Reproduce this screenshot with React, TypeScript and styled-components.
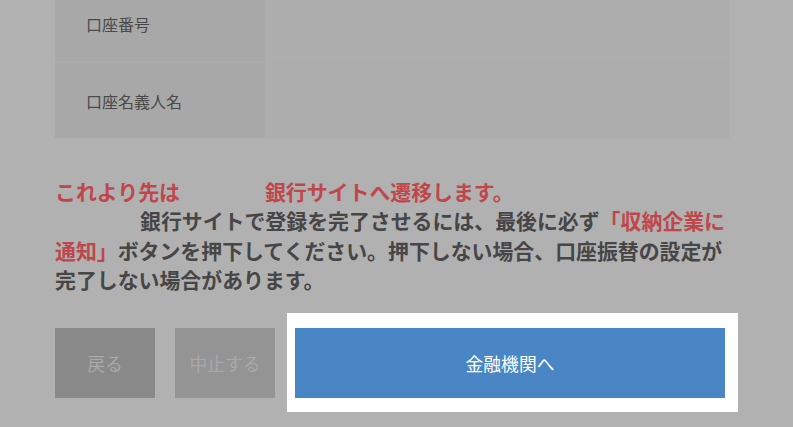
import styled, { createGlobalStyle } from "styled-components";

const GlobalStyle = createGlobalStyle`
  html {
    overflow: hidden;
    background: #b1b1b1;
  }
  body {
    margin: 0;
    padding: 0;
    font-family: "Noto Sans CJK JP", "Noto Sans", sans-serif;
  }
`;

const Page = styled.div`
  width: 675px;
  padding-left: 55px;
  padding-bottom: 30px;
`;

const Table = styled.div`
  margin-top: -13px;
  display: flex;
  flex-direction: column;
  gap: 3px;
  background: #acacac;
`;

const Row = styled.div`
  display: flex;
  height: 74px;
`;

const Label = styled.div`
  width: 179px;
  padding-left: 31px;
  background: #a8a8a8;
  color: #4a4a4a;
  font-size: 16px;
  display: flex;
  align-items: center;
`;

const Value = styled.div`
  flex: 1;
  background: #adadad;
`;

const Notice = styled.p`
  margin: 39px 0 0;
  font-size: 20.9px;
  line-height: 29.3px;
  font-weight: bold;
  color: #464646;
`;

const Red = styled.span`
  color: #bf474b;
`;

const Blank = styled.span`
  display: inline-block;
  width: 85px;
`;

const Actions = styled.div`
  margin-top: 34px;
  display: flex;
  gap: 20px;
`;

const Button = styled.button<{ $tone: string; $width: number }>`
  width: ${(p) => p.$width}px;
  height: 70px;
  border: none;
  padding: 0;
  background: ${(p) => p.$tone};
  color: #aaaaaa;
  font-family: inherit;
  font-size: 17.8px;
`;

const Highlight = styled.div`
  position: relative;
  &::before {
    content: "";
    position: absolute;
    top: -15px;
    right: -13px;
    bottom: -14px;
    left: -8px;
    background: #ffffff;
  }
`;

const PrimaryButton = styled(Button)`
  position: relative;
  color: #ffffff;
`;

export default function App() {
  return (
    <>
      <GlobalStyle />
      <Page>
        <Table>
          <Row>
            <Label>口座番号</Label>
            <Value />
          </Row>
          <Row>
            <Label>口座名義人名</Label>
            <Value />
          </Row>
        </Table>
        <Notice>
          <Red>
            これより先は<Blank />銀行サイトへ遷移します。
          </Red>
          <br />
          <Blank />
          銀行サイトで登録を完了させるには、最後に必ず
          <Red>「収納企業に通知」</Red>
          ボタンを押下してください。押下しない場合、口座振替の設定が完了しない場合があります。
        </Notice>
        <Actions>
          <Button $tone="#898989" $width={100}>戻る</Button>
          <Button $tone="#949494" $width={100}>中止する</Button>
          <Highlight>
            <PrimaryButton $tone="#4a86c5" $width={430}>金融機関へ</PrimaryButton>
          </Highlight>
        </Actions>
      </Page>
    </>
  );
}
